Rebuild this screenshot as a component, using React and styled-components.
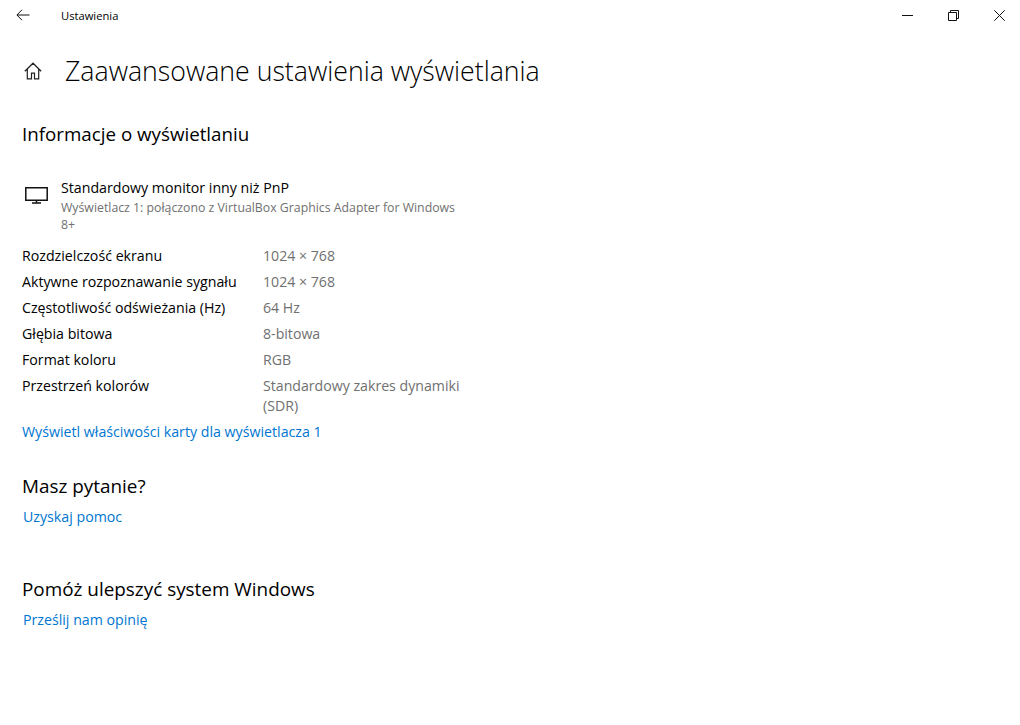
import React from "react";
import styled, { createGlobalStyle } from "styled-components";

const GlobalStyle = createGlobalStyle`
  html, body {
    margin: 0;
    background: #fff;
    font-family: "Open Sans", "Noto Sans", sans-serif;
    color: #000;
  }
  #root { height: 725px; overflow: hidden; }
`;

const specs = [
  ["Rozdzielczość ekranu", "1024 × 768"],
  ["Aktywne rozpoznawanie sygnału", "1024 × 768"],
  ["Częstotliwość odświeżania (Hz)", "64 Hz"],
  ["Głębia bitowa", "8-bitowa"],
  ["Format koloru", "RGB"],
  ["Przestrzeń kolorów", "Standardowy zakres dynamiki (SDR)"],
];

const App = () => (
  <>
    <GlobalStyle />
    <TitleBar>
      <BackIcon viewBox="0 0 14 12" width="14" height="12">
        <path d="M13.5 6H1M6 .8.9 6 6 11.2" fill="none" stroke="#111" strokeWidth="1" />
      </BackIcon>
      <AppName>Ustawienia</AppName>
      <WindowControls>
        <svg viewBox="0 0 11 11" width="11" height="11">
          <path d="M0 5.5h11" stroke="#111" strokeWidth="1" />
        </svg>
        <svg viewBox="0 0 11 11" width="11" height="11">
          <path d="M.5 2.5h8v8h-8zM2.5 2.5v-2h8v8h-2" fill="none" stroke="#111" strokeWidth="1" />
        </svg>
        <svg viewBox="0 0 11 11" width="11" height="11">
          <path d="M.3.3l10.4 10.4M10.7.3.3 10.7" fill="none" stroke="#111" strokeWidth="1" />
        </svg>
      </WindowControls>
    </TitleBar>
    <Page>
      <Header>
        <svg viewBox="0 0 18 18" width="18" height="18">
          <path
            d="M.8 9.2 9 1.2l8.2 8M3.3 7v9.8h4.2v-5.6h3v5.6h4.2V7"
            fill="none"
            stroke="#222"
            strokeWidth="1.2"
          />
        </svg>
        <Title>Zaawansowane ustawienia wyświetlania</Title>
      </Header>
      <SectionTitle>Informacje o wyświetlaniu</SectionTitle>
      <Monitor>
        <svg viewBox="0 0 23 17" width="23" height="17">
          <path d="M.8.8h21.4v12.4H.8zM11.5 13.5v2.4M7 16h9" fill="none" stroke="#111" strokeWidth="1.5" />
        </svg>
        <div>
          <MonitorName>Standardowy monitor inny niż PnP</MonitorName>
          <MonitorInfo>Wyświetlacz 1: połączono z VirtualBox Graphics Adapter for Windows 8+</MonitorInfo>
        </div>
      </Monitor>
      <SpecList>
        {specs.map(([label, value]) => (
          <React.Fragment key={label}>
            <SpecLabel>{label}</SpecLabel>
            <SpecValue>{value}</SpecValue>
          </React.Fragment>
        ))}
      </SpecList>
      <AdapterLink>Wyświetl właściwości karty dla wyświetlacza 1</AdapterLink>
      <QuestionTitle>Masz pytanie?</QuestionTitle>
      <HelpLink>Uzyskaj pomoc</HelpLink>
      <FeedbackTitle>Pomóż ulepszyć system Windows</FeedbackTitle>
      <HelpLink>Prześlij nam opinię</HelpLink>
    </Page>
  </>
);

const TitleBar = styled.div`
  display: flex;
  align-items: center;
  height: 30px;
  padding-left: 16px;
`;

const BackIcon = styled.svg`
  margin-right: 31px;
`;

const AppName = styled.span`
  font-size: 11.2px;
`;

const WindowControls = styled.div`
  display: flex;
  gap: 35px;
  margin-left: auto;
  padding-right: 15px;
`;

const Page = styled.main`
  padding: 0 0 0 22px;
`;

const Header = styled.header`
  display: flex;
  align-items: center;
  gap: 23px;
  height: 44px;
  margin-top: 19px;
  padding-left: 2px;
`;

const Title = styled.h1`
  margin: 0;
  font-size: 26.7px;
  font-weight: 300;
  line-height: 44px;
`;

const SectionTitle = styled.h2`
  margin: 27px 0 0;
  font-size: 18.75px;
  font-weight: 400;
  line-height: 28px;
`;

const Monitor = styled.div`
  display: flex;
  gap: 13px;
  margin-top: 29px;
  svg {
    margin: 10px 0 0 3px;
    flex: none;
  }
`;

const MonitorName = styled.div`
  font-size: 14.2px;
  line-height: 22px;
`;

const MonitorInfo = styled.div`
  width: 400px;
  font-size: 12.3px;
  line-height: 17px;
  color: #707070;
`;

const SpecList = styled.div`
  display: grid;
  grid-template-columns: 241px 200px;
  grid-auto-rows: minmax(26px, auto);
  margin-top: 10px;
`;

const SpecLabel = styled.div`
  font-size: 14.2px;
  line-height: 20px;
  padding-top: 3px;
`;

const SpecValue = styled(SpecLabel)`
  font-size: 14.15px;
  color: #707070;
`;

const AdapterLink = styled.a`
  display: block;
  margin-top: 6px;
  font-size: 14.2px;
  line-height: 20px;
  color: #0076d1;
`;

const QuestionTitle = styled.h2`
  margin: 30px 0 0;
  font-size: 18.9px;
  font-weight: 400;
  line-height: 28px;
`;

const FeedbackTitle = styled(QuestionTitle)`
  margin-top: 48px;
`;

const HelpLink = styled(AdapterLink)`
  margin: 7px 0 0 1px;
`;

export default App;
